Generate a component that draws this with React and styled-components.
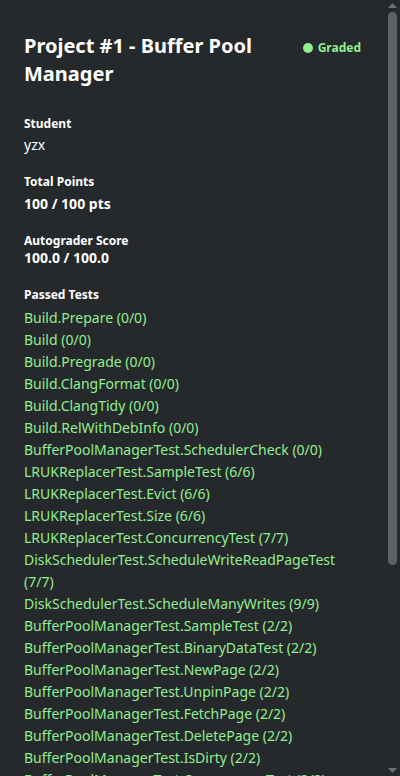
import React from "react";
import styled, { createGlobalStyle } from "styled-components";

const GlobalStyle = createGlobalStyle`
  html, body {
    margin: 0;
    background: #26292b;
    color: #ffffff;
    font-family: "Noto Sans", "Open Sans", sans-serif;
    overflow: hidden;
  }
`;

const Layout = styled.div`
  display: flex;
  align-items: flex-start;
  background: #26292b;
`;

const Main = styled.main`
  flex: 1;
  min-width: 0;
  padding: 32px 24px 24px;
`;

/* fake window scrollbar, the real one is hidden in the screenshot browser */
const Rail = styled.div`
  width: 15px;
  height: 100vh;
  flex-shrink: 0;
  display: flex;
  flex-direction: column;
  background: #26292b;
`;

const ArrowButton = styled.div`
  height: 12px;
  flex-shrink: 0;
  display: flex;
  justify-content: center;
  align-items: ${(p) => (p.$down ? "flex-start" : "flex-end")};
  padding: ${(p) => (p.$down ? "4px 0 0" : "0 0 4px")};
  box-sizing: border-box;
`;

const Track = styled.div`
  flex: 1;
  display: flex;
  flex-direction: column;
  padding: 0 3px;
`;

const Thumb = styled.div`
  height: ${(p) => p.$size}px;
  border-radius: 5px;
  background: #5c6164;
`;

const Triangle = ({ down }) => (
  <svg width="9" height="5" viewBox="0 0 9 5">
    <path d={down ? "M0 0H9L4.5 5Z" : "M0 5H9L4.5 0Z"} fill="#6a6f72" />
  </svg>
);

const Header = styled.div`
  display: flex;
  justify-content: space-between;
  align-items: flex-start;
  gap: 16px;
  margin-bottom: 28px;
`;

const Title = styled.h1`
  margin: 0;
  font-size: 20px;
  line-height: 28px;
  font-weight: 700;
  color: #ffffff;
`;

const Badge = styled.div`
  display: flex;
  align-items: center;
  gap: 5px;
  flex-shrink: 0;
  margin-top: 6px;
  font-size: 12px;
  line-height: 20px;
  font-weight: 700;
  color: #90ee90;
`;

const Dot = styled.span`
  width: 10px;
  height: 10px;
  border-radius: 50%;
  background: #90ee90;
`;

const Section = styled.section`
  margin-bottom: ${(p) => p.$gap || 18}px;
`;

const Label = styled.div`
  font-size: 12px;
  line-height: 16px;
  font-weight: 700;
  color: #ffffff;
  margin-bottom: ${(p) => p.$gap ?? 2}px;
`;

const Value = styled.div`
  font-size: 14px;
  line-height: ${(p) => p.$lh || 22}px;
  font-weight: ${(p) => (p.$bold ? 700 : 400)};
  color: #ffffff;
`;

const TestList = styled.div`
  margin-top: 4px;
`;

const TestItem = styled.div`
  font-size: 14px;
  line-height: 22px;
  color: #90ee90;
`;

const passed = [
  "Build.Prepare (0/0)",
  "Build (0/0)",
  "Build.Pregrade (0/0)",
  "Build.ClangFormat (0/0)",
  "Build.ClangTidy (0/0)",
  "Build.RelWithDebInfo (0/0)",
  "BufferPoolManagerTest.SchedulerCheck (0/0)",
  "LRUKReplacerTest.SampleTest (6/6)",
  "LRUKReplacerTest.Evict (6/6)",
  "LRUKReplacerTest.Size (6/6)",
  "LRUKReplacerTest.ConcurrencyTest (7/7)",
  "DiskSchedulerTest.ScheduleWriteReadPageTest (7/7)",
  "DiskSchedulerTest.ScheduleManyWrites (9/9)",
  "BufferPoolManagerTest.SampleTest (2/2)",
  "BufferPoolManagerTest.BinaryDataTest (2/2)",
  "BufferPoolManagerTest.NewPage (2/2)",
  "BufferPoolManagerTest.UnpinPage (2/2)",
  "BufferPoolManagerTest.FetchPage (2/2)",
  "BufferPoolManagerTest.DeletePage (2/2)",
  "BufferPoolManagerTest.IsDirty (2/2)",
  "BufferPoolManagerTest.ConcurrencyTest (2/2)",
];

export default function App() {
  return (
    <>
      <GlobalStyle />
      <Layout>
        <Main>
          <Header>
            <Title>Project #1 - Buffer Pool Manager</Title>
            <Badge>
              <Dot />
              Graded
            </Badge>
          </Header>

          <Section>
            <Label>Student</Label>
            <Value>yzx</Value>
          </Section>

          <Section>
            <Label $gap={3}>Total Points</Label>
            <Value $bold>100 / 100 pts</Value>
          </Section>

          <Section $gap={20}>
            <Label $gap={0}>Autograder Score</Label>
            <Value $bold $lh={18}>100.0 / 100.0</Value>
          </Section>

          <Section>
            <Label>Passed Tests</Label>
            <TestList>
              {passed.map((t) => (
                <TestItem key={t}>{t}</TestItem>
              ))}
            </TestList>
          </Section>
        </Main>

        <Rail>
          <ArrowButton>
            <Triangle />
          </ArrowButton>
          <Track>
            <Thumb $size={553} />
          </Track>
          <ArrowButton $down>
            <Triangle down />
          </ArrowButton>
        </Rail>
      </Layout>
    </>
  );
}
